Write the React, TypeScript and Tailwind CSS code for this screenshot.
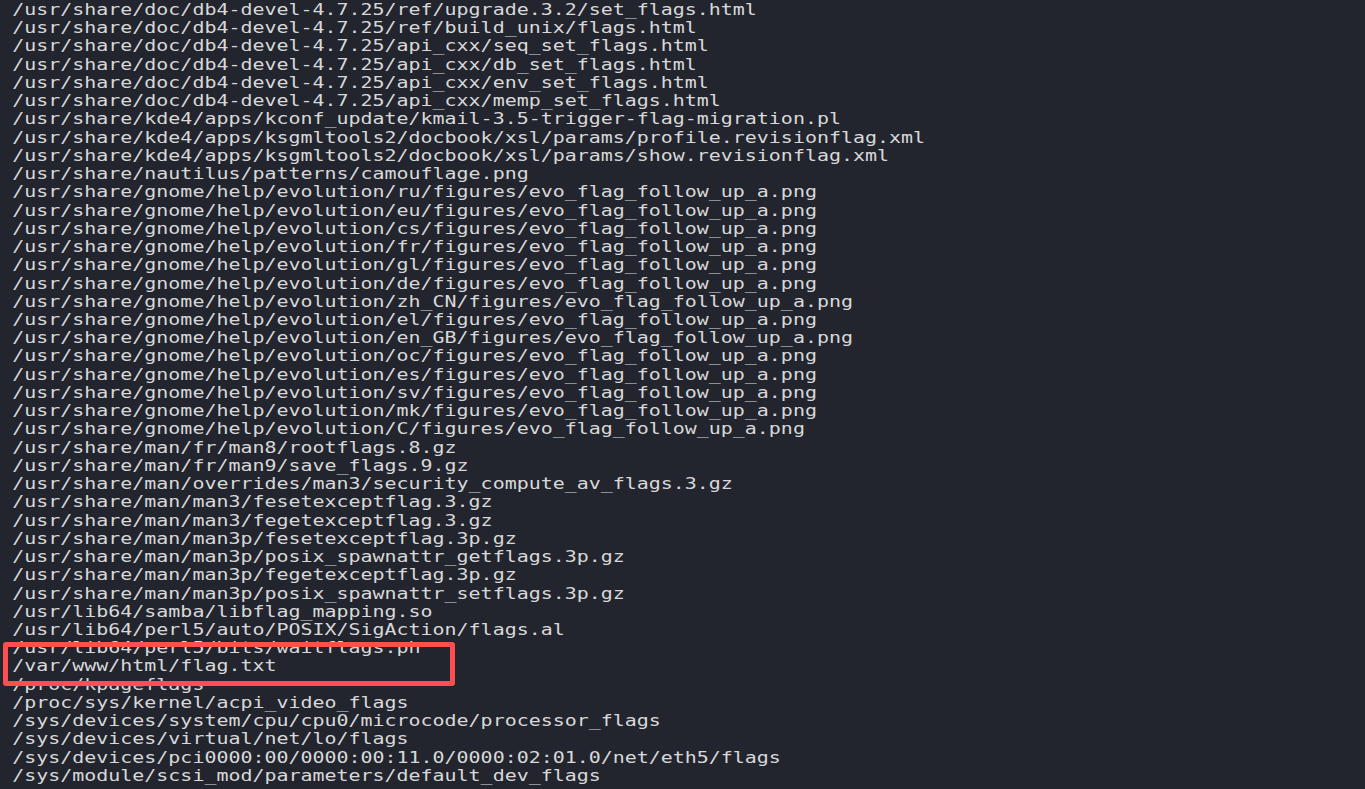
const langs = ['ru', 'eu', 'cs', 'fr', 'gl', 'de', 'zh_CN', 'el', 'en_GB', 'oc', 'es', 'sv', 'mk', 'C']

// output of a `find / -name "*flag*"` style search
const lines: string[] = [
  '/usr/share/doc/db4-devel-4.7.25/ref/upgrade.3.2/set_flags.html',
  '/usr/share/doc/db4-devel-4.7.25/ref/build_unix/flags.html',
  '/usr/share/doc/db4-devel-4.7.25/api_cxx/seq_set_flags.html',
  '/usr/share/doc/db4-devel-4.7.25/api_cxx/db_set_flags.html',
  '/usr/share/doc/db4-devel-4.7.25/api_cxx/env_set_flags.html',
  '/usr/share/doc/db4-devel-4.7.25/api_cxx/memp_set_flags.html',
  '/usr/share/kde4/apps/kconf_update/kmail-3.5-trigger-flag-migration.pl',
  '/usr/share/kde4/apps/ksgmltools2/docbook/xsl/params/profile.revisionflag.xml',
  '/usr/share/kde4/apps/ksgmltools2/docbook/xsl/params/show.revisionflag.xml',
  '/usr/share/nautilus/patterns/camouflage.png',
  ...langs.map((l) => `/usr/share/gnome/help/evolution/${l}/figures/evo_flag_follow_up_a.png`),
  '/usr/share/man/fr/man8/rootflags.8.gz',
  '/usr/share/man/fr/man9/save_flags.9.gz',
  '/usr/share/man/overrides/man3/security_compute_av_flags.3.gz',
  '/usr/share/man/man3/fesetexceptflag.3.gz',
  '/usr/share/man/man3/fegetexceptflag.3.gz',
  '/usr/share/man/man3p/fesetexceptflag.3p.gz',
  '/usr/share/man/man3p/posix_spawnattr_getflags.3p.gz',
  '/usr/share/man/man3p/fegetexceptflag.3p.gz',
  '/usr/share/man/man3p/posix_spawnattr_setflags.3p.gz',
  '/usr/lib64/samba/libflag_mapping.so',
  '/usr/lib64/perl5/auto/POSIX/SigAction/flags.al',
  '/usr/lib64/perl5/bits/waitflags.ph',
  '/var/www/html/flag.txt',
  '/proc/kpageflags',
  '/proc/sys/kernel/acpi_video_flags',
  '/sys/devices/system/cpu/cpu0/microcode/processor_flags',
  '/sys/devices/virtual/net/lo/flags',
  '/sys/devices/pci0000:00/0000:00:11.0/0000:02:01.0/net/eth5/flags',
  '/sys/module/scsi_mod/parameters/default_dev_flags',
]

export default function App() {
  return (
    <div className="relative h-[789px] w-[1365px] overflow-hidden bg-[#22252e]">
      {/* terminal glyphs are wide: stretch the mono font horizontally */}
      <div className="flex origin-left scale-x-[1.287] flex-col pl-[9.5px] pt-[1px] font-['DejaVu_Sans_Mono',monospace] text-[15.5px] leading-[18.24px] text-[#d8d8d8] whitespace-pre">
        {lines.map((line, i) => (
          <div key={i}>{line}</div>
        ))}
      </div>

      {/* highlight box drawn over the terminal */}
      <div className="absolute left-[3px] top-[642px] h-[44px] w-[452px] rounded-[3px] border-[5px] border-[#fd4f4f]" />
    </div>
  )
}
